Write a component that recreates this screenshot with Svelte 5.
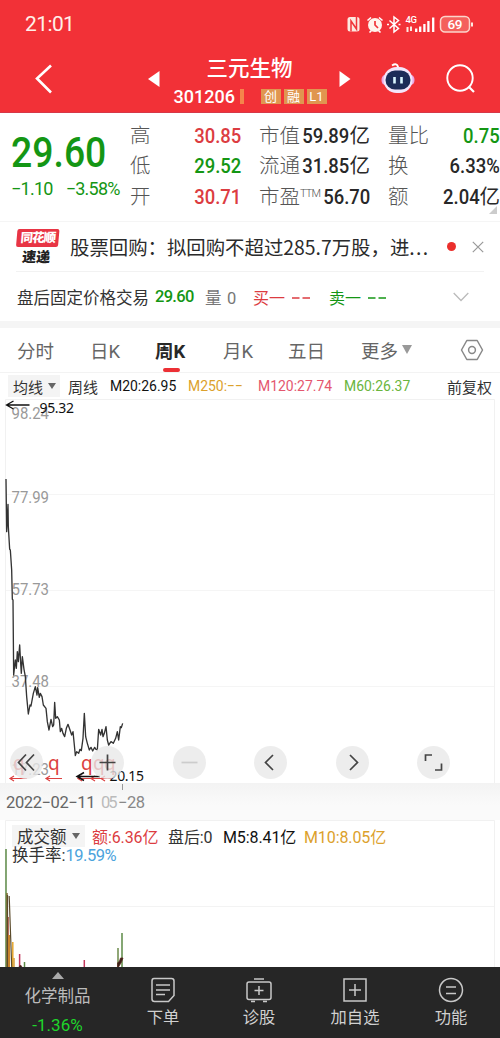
<script>
  const stats = [
    { label: '高', value: '30.85', tone: 'red' },
    { label: '市值', value: '59.89', unit: '亿', tone: 'dark' },
    { label: '量比', value: '0.75', tone: 'green' },
    { label: '低', value: '29.52', tone: 'green' },
    { label: '流通', value: '31.85', unit: '亿', tone: 'dark' },
    { label: '换', value: '6.33%', tone: 'dark' },
    { label: '开', value: '30.71', tone: 'red' },
    { label: '市盈', sup: 'TTM', value: '56.70', tone: 'dark' },
    { label: '额', value: '2.04', unit: '亿', tone: 'dark' },
  ];

  const tabs = ['分时', '日K', '周K', '月K', '五日', '更多'];
  let activeTab = $state('周K');

  const gridLines = [95.5, 191.5, 287.5];
  const priceLabels = [
    { y: 19.5, text: '98.24' },
    { y: 103.5, text: '77.99' },
    { y: 195.5, text: '57.73' },
    { y: 288, text: '37.48' },
    { y: 375.5, text: '17.23' },
  ];

  // price line, stored at three times the drawn size
  const price =
    '18,57 20,215 24,133 25,200 29,268 31,270 35,330 37,418 39,420 41,645 46,600 49,625 52,575 55,605 59,555 62,610 64,640 67,590 72,628 76,650 80,710 85,762 90,735 93,738 100,700 106,680 111,705 113,683 118,712 121,700 126,710 130,735 138,745 142,785 147,810 153,778 158,800 161,795 164,727 167,775 172,770 178,780 181,815 185,805 189,820 194,830 199,805 204,793 210,810 215,825 219,815 223,855 226,887 230,875 236,880 240,868 244,872 249,835 253,760 257,830 262,850 268,870 273,862 278,873 284,862 288,868 292,870 296,808 302,825 306,808 309,830 313,820 318,800 322,840 326,855 333,845 340,850 347,835 352,815 356,840 361,800 364,803 368,790';

  const bars = [
    { x: 6, top: 29, color: '#5c8a46' },
    { x: 7, top: 73, color: '#7d6a2e' },
    { x: 8, top: 97, color: '#b3402e' },
    { x: 12.8, top: 122, color: '#e5a52c' },
    { x: 14, top: 138, color: '#d9a03c' },
    { x: 19.6, top: 134, color: '#c2385c' },
    { x: 24.5, top: 142, color: '#5c8a46' },
    { x: 84.3, top: 140, color: '#c2385c' },
    { x: 118, top: 128, color: '#6b8a4a' },
    { x: 122, top: 113, color: '#5c8a46' },
  ];
</script>

<div class="app">
  <header>
    <div class="status">
      <span class="clock">21:01</span>
      <svg width="130" height="22" viewBox="0 0 130 22">
        <rect x="1.5" y="4" width="12" height="14.5" rx="2.5" fill="#fde8e0" />
        <path d="M5 18.5V8l5.500 8V4" fill="none" stroke="#f03338" stroke-width="1.5" />
        <circle cx="29" cy="12" r="7" fill="#fff3ec" />
        <path d="M29 8v4l3 3" fill="none" stroke="#f03338" stroke-width="1.7" />
        <path d="M21.5 7.5l3.500-3M36.5 7.5l-3.500-3M23.5 19.5l2-2M34.5 19.5l-2-2" stroke="#fff" stroke-width="1.6" />
        <path d="M43.5 7.5l9 8-4.500 3.500V4l4.500 3.500-9 8" fill="none" stroke="#fff" stroke-width="1.5" />
        <path d="M41 11.5h2M52.5 11.5h2" stroke="#fff" stroke-width="1.6" />
        <text x="59.500" y="10" font-size="9.500" font-weight="500" fill="#fff" textLength="11.500">4G</text>
        <path d="M61.5 14v5M65 13.5v4.5" stroke="#fde8e0" stroke-width="2" />
        <path d="M70.2 15.5v3.500M74.2 13.5v5.500M78.4 11v8M82.4 8v11M87.2 4.5v14.500" stroke="#fff" stroke-width="2.3" />
        <rect x="94.5" y="3.5" width="29" height="15.5" rx="4.5" fill="#f4605c" stroke="#fcd5cb" stroke-width="1.5" />
        <path d="M126 9.5v4" stroke="#fde8e0" stroke-width="2" />
        <text x="101.5" y="16" font-size="13.5" font-weight="500" fill="#fff" textLength="15">69</text>
      </svg>
    </div>
    <div class="titlebar">
      <svg width="20" height="32" viewBox="0 0 20 32"><path d="M17 2.5L3 15.5l14 14" fill="none" stroke="#fff" stroke-width="2.6" /></svg>
      <div class="stock">
        <svg width="12" height="16" viewBox="0 0 12 16"><path d="M11.500 0v16L0 8z" fill="#fff" /></svg>
        <div class="names">
          <h1>三元生物</h1>
          <div class="code"><span>301206</span><i></i><b>创</b><b>融</b><b>L1</b></div>
        </div>
        <svg width="12" height="16" viewBox="0 0 12 16"><path d="M.5 0v16L11.500 8z" fill="#fff" /></svg>
      </div>
      <svg class="robot" width="34" height="34" viewBox="0 0 34 34">
        <path d="M11 4.500q5-3 6 1.500v2" fill="none" stroke="#fff" stroke-width="2" />
        <ellipse cx="4" cy="19" rx="3.500" ry="5" fill="#eaa9e6" />
        <ellipse cx="30" cy="19" rx="3.500" ry="5" fill="#eaa9e6" />
        <rect x="2.500" y="6" width="29" height="26" rx="13" fill="#f3e6fb" />
        <rect x="4.500" y="9.500" width="25" height="19" rx="9.500" fill="#1c2c58" />
        <path d="M13.500 16v6.500M20.500 16v6.500" stroke="#d9f6ff" stroke-width="2.600" />
      </svg>
      <svg width="30" height="30" viewBox="0 0 30 30"><circle cx="14" cy="14" r="12.700" fill="none" stroke="#fff" stroke-width="1.900" /><path d="M22.500 22.500l5.500 5.500" stroke="#fff" stroke-width="2.200" /></svg>
    </div>
  </header>

  <section class="quote">
    <div class="last green">
      <strong>29.60</strong>
      <div class="change"><span>−1.10</span><span>−3.58%</span></div>
    </div>
    <div class="stats">
      {#each stats as s}
        <div class="stat">
          <label>{s.label}{#if s.sup}<sup>{s.sup}</sup>{/if}</label>
          <span class={s.tone}><b>{s.value}</b>{s.unit ?? ''}</span>
        </div>
      {/each}
    </div>
    <i class="corner"></i>
  </section>

  <section class="news">
    <div class="badge"><span>同花顺</span><em>速递</em></div>
    <p>股票回购：拟回购不超过285.7万股，进<span>...</span></p>
    <i class="dot"></i>
    <svg width="12" height="12" viewBox="0 0 12 12"><path d="M.8.8l10.400 10.400M11.200.8L.8 11.200" stroke="#999" stroke-width="1.200" /></svg>
  </section>

  <section class="after">
    <span class="name">盘后固定价格交易</span>
    <b class="green">29.60</b>
    <span class="qty">量 0</span>
    <span class="bid red">买一 <svg width="18" height="6"><path d="M0 4h7.500M10.500 4H18" stroke="currentColor" stroke-width="1.500" /></svg></span>
    <span class="ask green">卖一 <svg width="18" height="6"><path d="M0 4h7.500M10.500 4H18" stroke="currentColor" stroke-width="1.500" /></svg></span>
    <svg class="more" width="16" height="10" viewBox="0 0 16 10"><path d="M.7 1L8 8.500 15.300 1" fill="none" stroke="#bbb" stroke-width="1.300" /></svg>
  </section>

  <nav class="tabs">
    {#each tabs as tab}
      <button class:active={tab === activeTab} onclick={() => (activeTab = tab)}>{tab}{#if tab === '更多'}<i></i>{/if}</button>
    {/each}
    <svg width="24" height="22" viewBox="0 0 24 22"><path d="M6.800 1.500h10.400L22.500 11l-5.300 9.500H6.800L1.500 11z" fill="none" stroke="#888" stroke-width="1.500" stroke-linejoin="round" /><circle cx="12" cy="11" r="3.400" fill="none" stroke="#888" stroke-width="1.500" /></svg>
  </nav>

  <section class="averages">
    <span class="pill">均线<i></i></span>
    <span class="week">周线</span>
    <span class="ma m20">M20:26.95</span>
    <span class="ma m250">M250:−−</span>
    <span class="ma m120">M120:27.74</span>
    <span class="ma m60">M60:26.37</span>
    <span class="adjust">前复权</span>
  </section>

  <section class="chart">
    <svg width="500" height="384" viewBox="0 0 500 384">
      <path d="M5.500 384V.5h489V384" fill="none" stroke="#f1f1f1" />
      {#each gridLines as y}
        <path d="M6 {y}H494" stroke="#f5f5f5" />
      {/each}
      {#each priceLabels as p}
        <text class="num" x="11.500" y={p.y} font-size="16" fill="#999" textLength="37.500" lengthAdjust="spacingAndGlyphs">{p.text}</text>
      {/each}
      <g transform="translate(0 61) scale(.33333)">
        <polyline points={price} fill="none" stroke="#333" stroke-width="4" stroke-linejoin="round" />
      </g>
      <path d="M6.500 6H29.500M13.500 2L6.500 6l7 4" fill="none" stroke="#111" stroke-width="1.300" />
      <text class="note" x="39.500" y="14" textLength="34.500">95.32</text>
      <g class="events">
        <text x="13" y="371">q</text>
        <text x="48" y="371">q</text>
        <text x="81" y="371">q</text>
        <text x="93" y="371">q</text>
        <text x="104" y="371">q</text>
      </g>
      <path d="M10 379.500h17M14 377l-4 2.500 4 2.500M46 379.500h16M50 377l-4 2.500 4 2.500M78 379.500h14M82 377l-4 2.500 4 2.500M91 379.500h14M95 377l-4 2.500 4 2.500M101 379.500h11M105 377l-4 2.500 4 2.500" fill="none" stroke="#dc4141" stroke-width="1.200" />
      <path d="M76.500 377.500H100M84 373.500l-7 4 7 4" fill="none" stroke="#111" stroke-width="1.500" />
      <text class="note" x="109.500" y="382" textLength="34.500">20.15</text>
    </svg>
    <div class="controls">
      <button aria-label="fast back"><svg viewBox="0 0 33 33"><path d="M16 8.500l-7.500 8 7.500 8M24 8.500l-7.500 8 7.500 8" /></svg></button>
      <button aria-label="zoom in"><svg viewBox="0 0 33 33"><path d="M8.500 16.500h16M16.500 8.500v16" /></svg></button>
      <button aria-label="zoom out"><svg viewBox="0 0 33 33"><path class="off" d="M8.500 16.500h16" /></svg></button>
      <button aria-label="back"><svg viewBox="0 0 33 33"><path d="M19 9l-7.500 7.500L19 24" /></svg></button>
      <button aria-label="forward"><svg viewBox="0 0 33 33"><path d="M14 9l7.500 7.500L14 24" /></svg></button>
      <button aria-label="full screen"><svg viewBox="0 0 33 33"><path d="M8.500 15V9H15M24.500 17.500V24H18" /></svg></button>
    </div>
  </section>

  <svg class="dates" width="500" height="37" viewBox="0 0 500 37">
    <path d="M122.500 1v6" stroke="#999" />
    <text class="num" x="6" y="24.500" fill="#666" textLength="89.500">2022−02−11</text>
    <text class="num" x="101" y="24.500" fill="#bbb" textLength="16.500">05</text>
    <text class="num" x="118" y="24.500" fill="#888" textLength="27">−28</text>
  </svg>

  <section class="volume">
    <svg width="500" height="147" viewBox="0 0 500 147">
      <path d="M5.500 147V.5h489V147" fill="none" stroke="#f1f1f1" />
      <path d="M6 86.500H494" stroke="#f3f3f3" />
      {#each bars as bar}
        <path d="M{bar.x} {bar.top}V147" stroke={bar.color} stroke-width="1.500" />
      {/each}
      <path d="M7.500 147V75M9.200 76l2.500 71" fill="none" stroke="#5b4b2b" stroke-width="1.200" />
      <path d="M9 115v32" stroke="#c9822b" stroke-width="2" />
      <path d="M19 147l1.500-2 1.500 2M117.500 147v-4l2-2 1-3h2.500l-1.500 4-3 5" fill="#3a1f18" stroke="#5a2a20" stroke-width=".8" />
    </svg>
    <div class="vrow">
      <span class="pill">成交额<i></i></span>
      <span class="amount red">额:6.36亿</span>
      <span class="post">盘后:0</span>
      <span class="m5">M5:8.41亿</span>
      <span class="m10">M10:8.05亿</span>
    </div>
    <div class="turnover">换手率:<span>19.59%</span></div>
  </section>

  <footer>
    <div class="sector"><i></i><span>化学制品</span><b>-1.36%</b></div>
    <div class="item">
      <svg viewBox="0 0 26 26"><path d="M4 1.500h17.500q2.500 0 2.500 2.500v14.500l-5.500 6H4.500Q2 24.500 2 22V4Q2 1.500 4 1.500zM6 8h14M6 13h14M6 17.500h9" /></svg>
      <span>下单</span>
    </div>
    <div class="item">
      <svg viewBox="0 0 26 26"><path d="M8 2h10M3 5h20q2 0 2 2v13.500q0 2-2 2H3q-2 0-2-2V7q0-2 2-2zM5 24.500h4M17 24.500h4M13 9v9M8.500 13.500h9" /></svg>
      <span>诊股</span>
    </div>
    <div class="item">
      <svg viewBox="0 0 26 26"><path d="M2 2h22v22H2zM13 7v12M7 13h12" /></svg>
      <span>加自选</span>
    </div>
    <div class="item">
      <svg viewBox="0 0 26 26"><circle cx="13" cy="13" r="11.500" /><path d="M8 10h10M8 16.500h10" /></svg>
      <span>功能</span>
    </div>
  </footer>
</div>

<style>
  :global(body) {
    background: #fff;
  }
  .app {
    width: 500px;
    height: 1038px;
    overflow: hidden;
    display: flex;
    flex-direction: column;
    font-family: Roboto, "Noto Sans CJK SC", sans-serif;
    color: #333;
    white-space: nowrap;
  }
  .app * {
    box-sizing: border-box;
  }
  .app > * {
    flex: none;
  }
  svg {
    display: block;
    flex: none;
  }
  .red { color: #dc3c41; }
  .green { color: #149614; }
  .dark { color: #282828; }
  button {
    border: 0;
    padding: 0;
    background: none;
    font: inherit;
    color: inherit;
  }

  header {
    height: 113px;
    background: #f23137;
    border-bottom: 1px solid #d63848;
    color: #fff;
  }
  .status {
    height: 46px;
    padding: 1px 25px 0;
    display: flex;
    align-items: center;
    justify-content: space-between;
  }
  .status svg {
    margin-right: -1px;
  }
  .clock {
    font-size: 21px;
    letter-spacing: -0.6px;
    color: #ffefe8;
  }
  .titlebar {
    height: 66px;
    padding: 0 24px 0 34px;
    display: flex;
    align-items: center;
  }
  .stock {
    width: 204px;
    margin-left: 94px;
    display: flex;
    align-items: center;
    justify-content: space-between;
  }
  .names {
    display: flex;
    flex-direction: column;
    align-items: center;
  }
  h1 {
    margin: 3px 0 0;
    font-size: 21.500px;
    line-height: 32px;
    font-weight: 500;
  }
  .code {
    height: 22px;
    margin-bottom: 1px;
    display: flex;
    align-items: center;
    font-size: 18px;
    font-weight: 500;
  }
  .code span {
    width: 62px;
    padding-left: 1px;
  }
  .code i {
    width: 4px;
    height: 15px;
    margin: 0 17px 0 5px;
    background: #f5844b;
  }
  .code b {
    width: 20px;
    height: 15px;
    margin-right: 3px;
    background: #e09650;
    font-size: 13px;
    line-height: 15px;
    font-weight: 400;
    text-align: center;
  }
  .code b:last-child {
    margin: 0;
  }
  .robot {
    margin: -2px 31px 0 30px;
  }

  .quote {
    position: relative;
    height: 109px;
    display: flex;
    border-bottom: 1px solid #f5f5f5;
  }
  .last {
    width: 130px;
    padding: 17px 0 0 11px;
  }
  .last strong {
    display: block;
    width: 105px;
    font-size: 42px;
    line-height: 46px;
    font-weight: 500;
    transform: scaleX(0.89);
    transform-origin: left;
  }
  .change {
    display: flex;
    gap: 13px;
    margin-top: 2px;
    font-size: 18px;
    line-height: 22px;
    letter-spacing: -0.75px;
  }
  .stats {
    width: 370px;
    height: 91px;
    margin-top: 8px;
    display: grid;
    grid-template-columns: 111px 111px 112px;
    grid-template-rows: repeat(3, 30.300px);
    column-gap: 18px;
  }
  .stat {
    display: flex;
    justify-content: space-between;
    align-items: center;
    font-size: 20.500px;
    line-height: 30px;
  }
  .stat label {
    font-weight: 300;
    color: #555;
  }
  .stat sup {
    font-size: 11px;
    line-height: 1;
    letter-spacing: -0.8px;
    vertical-align: 7px;
  }
  .stat > span {
    margin-left: -12px;
  }
  .stat b {
    display: inline-block;
    font-weight: 500;
    transform: scaleX(0.9);
    transform-origin: right;
  }
  .corner {
    position: absolute;
    right: 3px;
    bottom: 7px;
    border-left: 8px solid transparent;
    border-bottom: 8px solid #ccc;
  }

  .news {
    height: 50px;
    margin: 0 16px;
    border-bottom: 1px solid #f2f2f2;
    display: flex;
    align-items: center;
  }
  .badge {
    width: 42px;
    height: 35px;
    text-align: center;
    transform: skewX(-5deg);
  }
  .badge span {
    display: block;
    height: 18px;
    border-radius: 2px;
    background: #e83545;
    color: #fff;
    font-size: 12.500px;
    line-height: 18px;
    font-weight: 900;
    letter-spacing: -1px;
  }
  .badge em {
    display: block;
    font-size: 14px;
    line-height: 21px;
    font-style: normal;
    font-weight: 900;
    color: #222;
  }
  .news p {
    width: 373px;
    margin: 0 0 0 12px;
    font-family: "Noto Sans CJK SC", sans-serif;
    font-size: 19.400px;
    color: #2b2b2b;
  }
  .news p span {
    letter-spacing: 1.300px;
  }
  .dot {
    width: 9px;
    height: 9px;
    margin: 0 16px 0 4px;
    border-radius: 50%;
    background: #eb2f2c;
  }

  .after {
    height: 49px;
    padding: 0 31px 0 17px;
    display: flex;
    align-items: center;
    font-size: 16.500px;
  }
  .after .name { width: 138px; }
  .after b {
    width: 50px;
    font-weight: 500;
    letter-spacing: -0.7px;
  }
  .after .qty {
    width: 48px;
    color: #777;
    word-spacing: 1.500px;
  }
  .after .bid, .after .ask {
    width: 76px;
    display: flex;
    align-items: center;
    gap: 7px;
    font-size: 16px;
  }
  .after .more {
    margin-left: auto;
  }

  .tabs {
    height: 52px;
    padding: 0 17px;
    border-top: 7px solid #f5f5f5;
    border-bottom: 1px solid #f3f3f3;
    display: grid;
    grid-template-columns: 73px 65px 68px 65px 73px 1fr 24px;
    align-items: center;
    font-size: 18.500px;
    color: #666;
  }
  .tabs button {
    position: relative;
    height: 44px;
    padding-bottom: 1px;
    display: flex;
    align-items: center;
    gap: 4px;
    justify-self: start;
  }
  .tabs button i {
    border: 5.500px solid transparent;
    border-top: 9px solid #999;
    border-bottom: 0;
  }
  .tabs .active {
    font-weight: 700;
    color: #282828;
  }
  .active::after {
    content: '';
    position: absolute;
    left: 8px;
    bottom: 0;
    width: 17px;
    height: 4px;
    border-radius: 2px;
    background: #ec3035;
  }
  .tabs svg {
    margin-left: 1px;
  }

  .averages {
    height: 26px;
    padding: 0 8px;
    display: flex;
    align-items: center;
    font-size: 15px;
  }
  .pill {
    height: 22px;
    padding: 0 5px;
    display: flex;
    align-items: center;
    gap: 5px;
    background: #f4f4f4;
    letter-spacing: 0;
  }
  .pill i {
    border: 4.500px solid transparent;
    border-top: 6px solid #666;
    border-bottom: 0;
  }
  .averages .pill { width: 52px; margin-right: 8px; }
  .week { width: 42px; }
  .ma {
    font-weight: 450;
    transform: scaleX(0.93);
    transform-origin: left;
  }
  .m20 { width: 78px; color: #111; }
  .m250 { width: 70px; color: #dca12c; }
  .m120 { width: 86px; color: #e4566e; }
  .m60 { color: #6ab53d; }
  .adjust { margin-left: auto; }

  .chart {
    position: relative;
    height: 384px;
  }
  .chart > svg {
    overflow: visible;
  }
  .num {
    font-family: Roboto, sans-serif;
  }
  .note {
    font-family: "Noto Sans", sans-serif;
    font-size: 14px;
    fill: #111;
  }
  .events text {
    font-family: "Noto Sans", sans-serif;
    font-size: 19px;
    fill: #dc4141;
  }
  .controls {
    position: absolute;
    left: 9.500px;
    bottom: 4px;
    display: flex;
    gap: 48.500px;
  }
  .controls button {
    width: 33px;
    height: 33px;
    border-radius: 50%;
    background: rgba(232, 232, 232, 0.78);
  }
  .controls path {
    fill: none;
    stroke: #444;
    stroke-width: 1.700;
  }
  .controls .off {
    stroke: #ccc;
  }

  .dates {
    background: linear-gradient(#f3f3f3, #fafafa 60%);
    font-size: 16.500px;
  }

  .volume {
    position: relative;
    height: 147px;
    padding: 5px 12px 0;
  }
  .volume > svg {
    position: absolute;
    left: 0;
    top: 0;
  }
  .vrow {
    position: relative;
    height: 21px;
    display: flex;
    align-items: center;
    font-size: 16px;
    letter-spacing: -0.1px;
  }
  .vrow .pill { width: 73px; margin-right: 7px; font-size: 16.500px; }
  .amount { width: 76px; }
  .post { width: 55px; }
  .m5 { width: 81px; color: #111; }
  .m10 { color: #dca12c; }
  .turnover {
    position: relative;
    font-size: 16.500px;
    line-height: 19px;
  }
  .turnover span {
    letter-spacing: -0.5px;
    color: #4ba3dc;
  }

  footer {
    height: 71px;
    background: #262626;
    color: #d0d0d0;
    display: grid;
    grid-template-columns: 115px repeat(4, 96px);
    font-size: 16.300px;
  }
  .sector, .item {
    display: flex;
    flex-direction: column;
    align-items: center;
  }
  .sector i {
    margin-top: 5px;
    border: 6px solid transparent;
    border-bottom: 7px solid #aaa;
    border-top: 0;
  }
  .sector span {
    margin-top: 6px;
    font-size: 16.500px;
    line-height: 24px;
    color: #bbb;
  }
  .sector b {
    margin-top: 5px;
    font-weight: 400;
    font-size: 17px;
    line-height: 22px;
    color: #1fd52b;
  }
  .item svg {
    width: 26px;
    height: 26px;
    margin-top: 10px;
    fill: none;
    stroke: #c8c8c8;
    stroke-width: 1.500;
  }
  .item span {
    margin-top: 3px;
    line-height: 24px;
  }
</style>
